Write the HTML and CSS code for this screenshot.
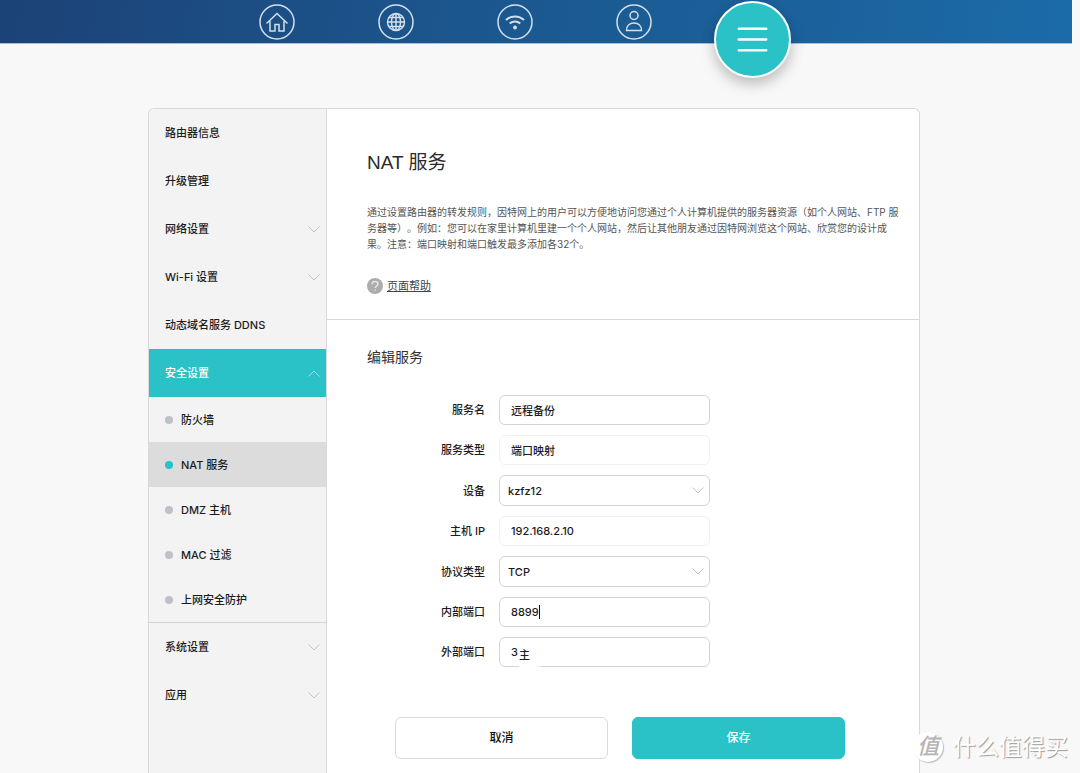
FILE: index.html
```html
<!DOCTYPE html>
<html lang="zh-CN">
<head>
<meta charset="utf-8">
<title>NAT 服务</title>
<link rel="stylesheet" href="styles.css">
</head>
<body>
<div class="window">
  <div class="page">
    <header class="topbar">
      <nav class="topnav">
        <a class="nav-icon" href="#" aria-label="首页">
          <svg viewBox="0 0 36 36"><circle cx="18" cy="18" r="17"/><path d="M7.5 19.500 18 9.500l10.500 10M11 17v10h5v-6.500h4v6.500h5V17"/></svg>
        </a>
        <a class="nav-icon" href="#" aria-label="上网">
          <svg viewBox="0 0 36 36"><circle cx="18" cy="18" r="17"/><circle cx="18" cy="18" r="8.500"/><ellipse cx="18" cy="18" rx="4.500" ry="8.500"/><path d="M18 9.500v17M9.500 18h17M11 13.500h14M11 22.500h14"/></svg>
        </a>
        <a class="nav-icon" href="#" aria-label="Wi-Fi">
          <svg viewBox="0 0 36 36"><circle cx="18" cy="18" r="17"/><path class="wave" d="M9 16a13 13 0 0 1 18 0M12.700 19.400a8 8 0 0 1 10.600 0"/><circle class="dot" cx="18" cy="23.500" r="1.900"/></svg>
        </a>
        <a class="nav-icon" href="#" aria-label="终端">
          <svg viewBox="0 0 36 36"><circle cx="18" cy="18" r="17"/><circle cx="18" cy="11.500" r="4"/><path d="M10.500 26.500c0-4.500 3-7.500 7.500-7.500s7.500 3 7.500 7.500z"/></svg>
        </a>
        <a class="nav-icon nav-menu" href="#" aria-label="更多功能">
          <svg viewBox="0 0 72 72"><path d="M22.500 25.500h27M22.500 36h27M22.500 46.500h27"/></svg>
        </a>
      </nav>
    </header>

    <div class="card">
      <nav class="sidebar">
        <a class="item" href="#">路由器信息</a>
        <a class="item" href="#">升级管理</a>
        <a class="item" href="#">网络设置<svg class="chevron" viewBox="0 0 12 7"><path d="m.5.5 5.500 5.500 5.500-5.500"/></svg></a>
        <a class="item" href="#">Wi-Fi 设置<svg class="chevron" viewBox="0 0 12 7"><path d="m.5.5 5.500 5.500 5.500-5.500"/></svg></a>
        <a class="item" href="#">动态域名服务 DDNS</a>
        <a class="item open" href="#">安全设置<svg class="chevron" viewBox="0 0 12 7"><path d="m.5 6.500 5.500-5.500 5.500 5.500"/></svg></a>
        <div class="submenu">
          <a class="subitem" href="#">防火墙</a>
          <a class="subitem current" href="#">NAT 服务</a>
          <a class="subitem" href="#">DMZ 主机</a>
          <a class="subitem" href="#">MAC 过滤</a>
          <a class="subitem" href="#">上网安全防护</a>
        </div>
        <a class="item" href="#">系统设置<svg class="chevron" viewBox="0 0 12 7"><path d="m.5.5 5.500 5.500 5.500-5.500"/></svg></a>
        <a class="item" href="#">应用<svg class="chevron" viewBox="0 0 12 7"><path d="m.5.5 5.500 5.500 5.500-5.500"/></svg></a>
      </nav>

      <main class="content">
        <section class="intro">
          <h1>NAT 服务</h1>
          <p>通过设置路由器的转发规则，因特网上的用户可以方便地访问您通过个人计算机提供的服务器资源（如个人网站、FTP 服务器等）。例如：您可以在家里计算机里建一个个人网站，然后让其他朋友通过因特网浏览这个网站、欣赏您的设计成果。注意：端口映射和端口触发最多添加各32个。</p>
          <a class="help" href="#">
            <svg viewBox="0 0 16 16"><circle cx="8" cy="8" r="8"/><path d="M5 6.300C5.100 4.600 6.300 3.600 8 3.600s3 1 3 2.500c0 1.900-2.800 2-2.800 4M8.200 11.500v1.300"/></svg>
            <span>页面帮助</span>
          </a>
        </section>

        <form class="editor">
          <h2>编辑服务</h2>
          <div class="fields">
            <label for="name">服务名</label>
            <div class="control"><input id="name" type="text" value="远程备份"></div>
            <label for="kind">服务类型</label>
            <div class="control"><input id="kind" class="fixed" type="text" value="端口映射" readonly></div>
            <label for="device">设备</label>
            <div class="control">
              <select id="device"><option>kzfz12</option></select>
              <svg class="chevron" viewBox="0 0 12 7"><path d="m.5.5 5.500 5.500 5.500-5.500"/></svg>
            </div>
            <label for="host">主机 IP</label>
            <div class="control"><input id="host" class="fixed" type="text" value="192.168.2.10" readonly></div>
            <label for="protocol">协议类型</label>
            <div class="control">
              <select id="protocol"><option>TCP</option></select>
              <svg class="chevron" viewBox="0 0 12 7"><path d="m.5.5 5.500 5.500 5.500-5.500"/></svg>
            </div>
            <label for="inner">内部端口</label>
            <div class="control"><input id="inner" type="text" value="8899"><i class="caret"></i></div>
            <label for="outer">外部端口</label>
            <div class="control"><input id="outer" type="text" value="3"><span class="composing">主</span></div>
          </div>
          <div class="actions">
            <button type="button">取消</button>
            <button type="submit" class="primary">保存</button>
          </div>
        </form>
      </main>
    </div>

    <div class="watermark"><span class="seal">值</span><span>什么值得买</span></div>
  </div>
  <div class="scroll-track"><div class="scroll-thumb"></div></div>
</div>
</body>
</html>
```
FILE: styles.css
```css
* { box-sizing: border-box; }

body {
  margin: 0;
  background: #f8f8f8;
  color: #1c1c1c;
  font: 500 11px/16px Inter, "Noto Sans CJK SC", sans-serif;
  text-spacing-trim: space-all;
}

a { color: inherit; text-decoration: none; }
h1, h2, p { margin: 0; font-weight: 400; }
svg { display: block; fill: none; }

.window {
  display: grid;
  grid-template-columns: 1fr 8px;
  height: 100vh;
  overflow: hidden;
}

.page {
  position: relative;
  display: flex;
  flex-direction: column;
  min-height: 100vh;
}

.topbar {
  position: relative;
  z-index: 1;
  height: 44px;
  padding: 0 152px 0 217px;
  background: linear-gradient(100deg, #1c4277 0%, #1b558c 40%, #1b6ba8 100%);
  border-bottom: 1px solid #a9bfd3;
}

.topnav {
  display: grid;
  grid-template-columns: repeat(5, 119px);
  justify-items: center;
  align-items: start;
}

.nav-icon { margin-top: 4px; }
.nav-icon svg {
  width: 36px;
  height: 36px;
  stroke: #d3e0ec;
  stroke-width: 1.5;
}
.nav-icon .wave { stroke-width: 2; }
.nav-icon .dot { fill: #d3e0ec; stroke: none; }

.nav-menu {
  margin-top: 1px;
  border: 2px solid #fff;
  border-radius: 50%;
  background: #2ac1c7;
  box-shadow: 0 6px 14px rgba(0, 0, 0, 0.25);
}
.nav-menu svg {
  width: 73px;
  height: 73px;
  stroke: #fff;
  stroke-width: 2.5;
  stroke-linecap: round;
}

.card {
  flex: 1;
  display: grid;
  grid-template-columns: 178px 1fr;
  margin: 64px 152px 0 148px;
  border: 1px solid #d8d8d8;
  border-bottom: 0;
  border-radius: 6px 6px 0 0;
  background: #fff;
  overflow: hidden;
}

.sidebar {
  background: #f3f3f3;
  border-right: 1px solid #d8d8d8;
}

.item {
  display: flex;
  align-items: center;
  justify-content: space-between;
  height: 48px;
  padding: 0 6px 0 16px;
}

.chevron {
  width: 12px;
  height: 7px;
  stroke: #c4c4c4;
  overflow: visible;
}

.open { background: #2ac1c7; color: #fff; }
.open .chevron { stroke: #9fe1e4; }

.submenu { border-bottom: 1px solid #d3d3d3; }

.subitem {
  display: flex;
  align-items: center;
  gap: 8px;
  height: 45px;
  padding: 0 16px;
}
.subitem::before {
  content: "";
  width: 8px;
  height: 8px;
  border-radius: 50%;
  background: #bfc1ca;
}
.current { background: #dcdcdc; }
.current::before { background: #2ac1c7; }

.intro {
  padding: 41px 16px 21px 40px;
  border-bottom: 1px solid #d8d8d8;
}

h1 {
  color: #2a2a2a;
  font-family: "Liberation Sans", "Noto Sans CJK SC", sans-serif;
  font-size: 19px;
  line-height: 26px;
}

.intro p {
  margin-top: 28px;
  font-size: 10px;
  line-height: 16px;
  color: #555;
}

.help {
  display: inline-flex;
  align-items: center;
  gap: 4px;
  margin-top: 26px;
  color: #444;
  font-weight: 400;
}
.help span { text-decoration: underline; }
.help svg { width: 16px; height: 16px; stroke: #e6e6e6; stroke-width: 1.5; }
.help circle { fill: #acacac; stroke: none; }

.editor { padding: 27px 40px 14px; }

h2 { font-size: 14px; line-height: 20px; color: #333; }

.fields {
  display: grid;
  grid-template-columns: 118px 211px;
  gap: 10px 14px;
  align-items: center;
  margin-top: 28px;
}
.fields label { text-align: right; }

.control { position: relative; display: flex; }

input, select {
  width: 100%;
  height: 30px;
  padding: 0 11px;
  border: 1px solid #d3d3d3;
  border-radius: 6px;
  outline: 0;
  background: #fff;
  color: inherit;
  font: inherit;
}
select { height: 31px; padding: 0 8px; appearance: none; }
.fixed { border-color: #f2f2f2; }

.control .chevron { position: absolute; right: 6px; top: 12px; pointer-events: none; }

.caret {
  position: absolute;
  left: 40px;
  top: 8px;
  width: 1px;
  height: 14px;
  background: #111;
}

.composing {
  position: absolute;
  left: 20px;
  top: 10px;
  width: 24px;
  height: 20px;
  background: linear-gradient(90deg, #fff 70%, rgba(255, 255, 255, 0));
}

.actions {
  display: grid;
  grid-template-columns: 213px 213px;
  gap: 24px;
  margin-top: 50px;
  padding-left: 28px;
}
.actions button {
  height: 42px;
  border: 1px solid #dadada;
  border-radius: 6px;
  background: #fff;
  color: #111;
  font: inherit;
  font-size: 12px;
}
.actions .primary { border-color: #2ac1c7; background: #2ac1c7; color: #fff; }

.watermark {
  position: absolute;
  right: 4px;
  bottom: 10px;
  display: flex;
  align-items: center;
  gap: 10px;
  color: #fff;
  font-size: 23px;
  font-weight: 400;
  line-height: 32px;
  text-shadow: 1px 1px 1px #999;
}
.seal {
  width: 30px;
  height: 30px;
  border-radius: 50%;
  background: #fff;
  box-shadow: 1px 1px 1px #bbb;
  color: #b4b4b4;
  font-size: 22px;
  font-style: italic;
  font-weight: 500;
  line-height: 28px;
  text-align: center;
  text-shadow: none;
}
```
